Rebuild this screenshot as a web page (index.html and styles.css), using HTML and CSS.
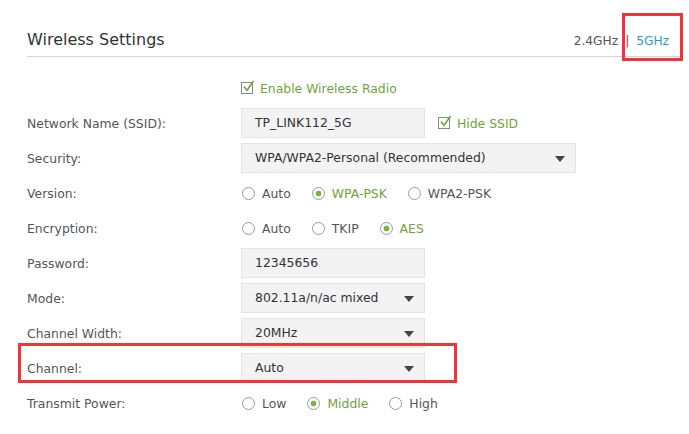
FILE: index.html
```html
<!DOCTYPE html>
<html>
<head>
<meta charset="utf-8">
<link rel="stylesheet" href="styles.css">
</head>
<body>
<div class="panel">
  <div class="head">
    <h1 class="title">Wireless Settings</h1>
    <div class="bands"><span class="band">2.4GHz</span><span class="sep">|</span><span class="band active">5GHz</span></div>
  </div>
  <div class="form">
    <div class="row">
      <div class="label"></div>
      <label class="check on"><span class="box"><svg viewBox="0 0 14 14" width="14" height="14"><path d="M3 6.5 L6 10.5 L12.5 1" fill="none" stroke="#6ea53a" stroke-width="1.6"/></svg></span>Enable Wireless Radio</label>
    </div>
    <div class="row">
      <div class="label">Network Name (SSID):</div>
      <div class="field short">TP_LINK112_5G</div>
      <label class="check on side"><span class="box"><svg viewBox="0 0 14 14" width="14" height="14"><path d="M3 6.5 L6 10.5 L12.5 1" fill="none" stroke="#6ea53a" stroke-width="1.6"/></svg></span>Hide SSID</label>
    </div>
    <div class="row">
      <div class="label">Security:</div>
      <div class="field select long">WPA/WPA2-Personal (Recommended)<span class="arrow"></span></div>
    </div>
    <div class="row">
      <div class="label">Version:</div>
      <div class="radios">
        <span class="radio">Auto</span>
        <span class="radio on">WPA-PSK</span>
        <span class="radio">WPA2-PSK</span>
      </div>
    </div>
    <div class="row">
      <div class="label">Encryption:</div>
      <div class="radios">
        <span class="radio">Auto</span>
        <span class="radio">TKIP</span>
        <span class="radio on">AES</span>
      </div>
    </div>
    <div class="row">
      <div class="label">Password:</div>
      <div class="field short">12345656</div>
    </div>
    <div class="row">
      <div class="label">Mode:</div>
      <div class="field select short">802.11a/n/ac mixed<span class="arrow"></span></div>
    </div>
    <div class="row">
      <div class="label">Channel Width:</div>
      <div class="field select short">20MHz<span class="arrow"></span></div>
    </div>
    <div class="row">
      <div class="label">Channel:</div>
      <div class="field select short">Auto<span class="arrow"></span></div>
    </div>
    <div class="row">
      <div class="label">Transmit Power:</div>
      <div class="radios">
        <span class="radio">Low</span>
        <span class="radio on">Middle</span>
        <span class="radio">High</span>
      </div>
    </div>
  </div>
  <div class="mark mark-band"></div>
  <div class="mark mark-channel"></div>
</div>
</body>
</html>
```
FILE: styles.css
```css
* { box-sizing: border-box; }
html, body { margin: 0; padding: 0; background: #fff; }
body { width: 689px; height: 434px; overflow: hidden; font-family: "DejaVu Sans", sans-serif; font-size: 12.4px; color: #555; }
.panel { position: relative; padding: 0 8px 0 27px; }
.head { display: flex; align-items: flex-end; justify-content: space-between; height: 57px; border-bottom: 1px solid #d4d4d4; padding-bottom: 6px; }
.title { margin: 0; font-weight: normal; font-size: 16px; color: #333; line-height: 20px; }
.bands { display: flex; font-size: 12.2px; line-height: 16px; color: #555; padding-right: 12px; padding-bottom: 1px; }
.sep { margin: 0 7px; }
.band.active { color: #2d9bd2; }
.form { display: flex; flex-direction: column; gap: 5px; padding-top: 16px; }
.row { display: flex; align-items: center; height: 30px; }
.label { width: 214px; flex: none; color: #555; }
.field { position: relative; height: 30px; line-height: 28px; background: #f3f3f3; border: 1px solid #e3e3e3; padding: 0 13px; color: #333; }
.short { width: 184px; }
.long { width: 335px; }
.arrow { position: absolute; right: 10px; top: 12px; width: 0; height: 0; border-left: 5px solid transparent; border-right: 5px solid transparent; border-top: 6px solid #444; }
.check { display: flex; align-items: center; color: #6ea53a; }
.check.side { margin-left: 13px; }
.box { position: relative; width: 12px; height: 12px; border: 1px solid #888; margin-right: 7px; }
.box svg { position: absolute; left: -1px; top: -3px; }
.radios { display: flex; align-items: center; gap: 21px; padding-left: 1px; }
.radio { display: flex; align-items: center; color: #555; }
.radio::before { content: ""; width: 13px; height: 13px; border-radius: 50%; border: 1px solid #9a9a9a; background: #fff; margin-right: 7px; box-sizing: border-box; }
.radio.on { color: #6ea53a; }
.radio.on::before { background: radial-gradient(circle, #7cb342 0 2.6px, #fff 3.2px); }
.mark { position: absolute; border: 3px solid #ef3535; }
.mark-band { left: 622px; top: 13px; width: 61px; height: 48px; }
.mark-channel { left: 18px; top: 343px; width: 439px; height: 40px; }
```
